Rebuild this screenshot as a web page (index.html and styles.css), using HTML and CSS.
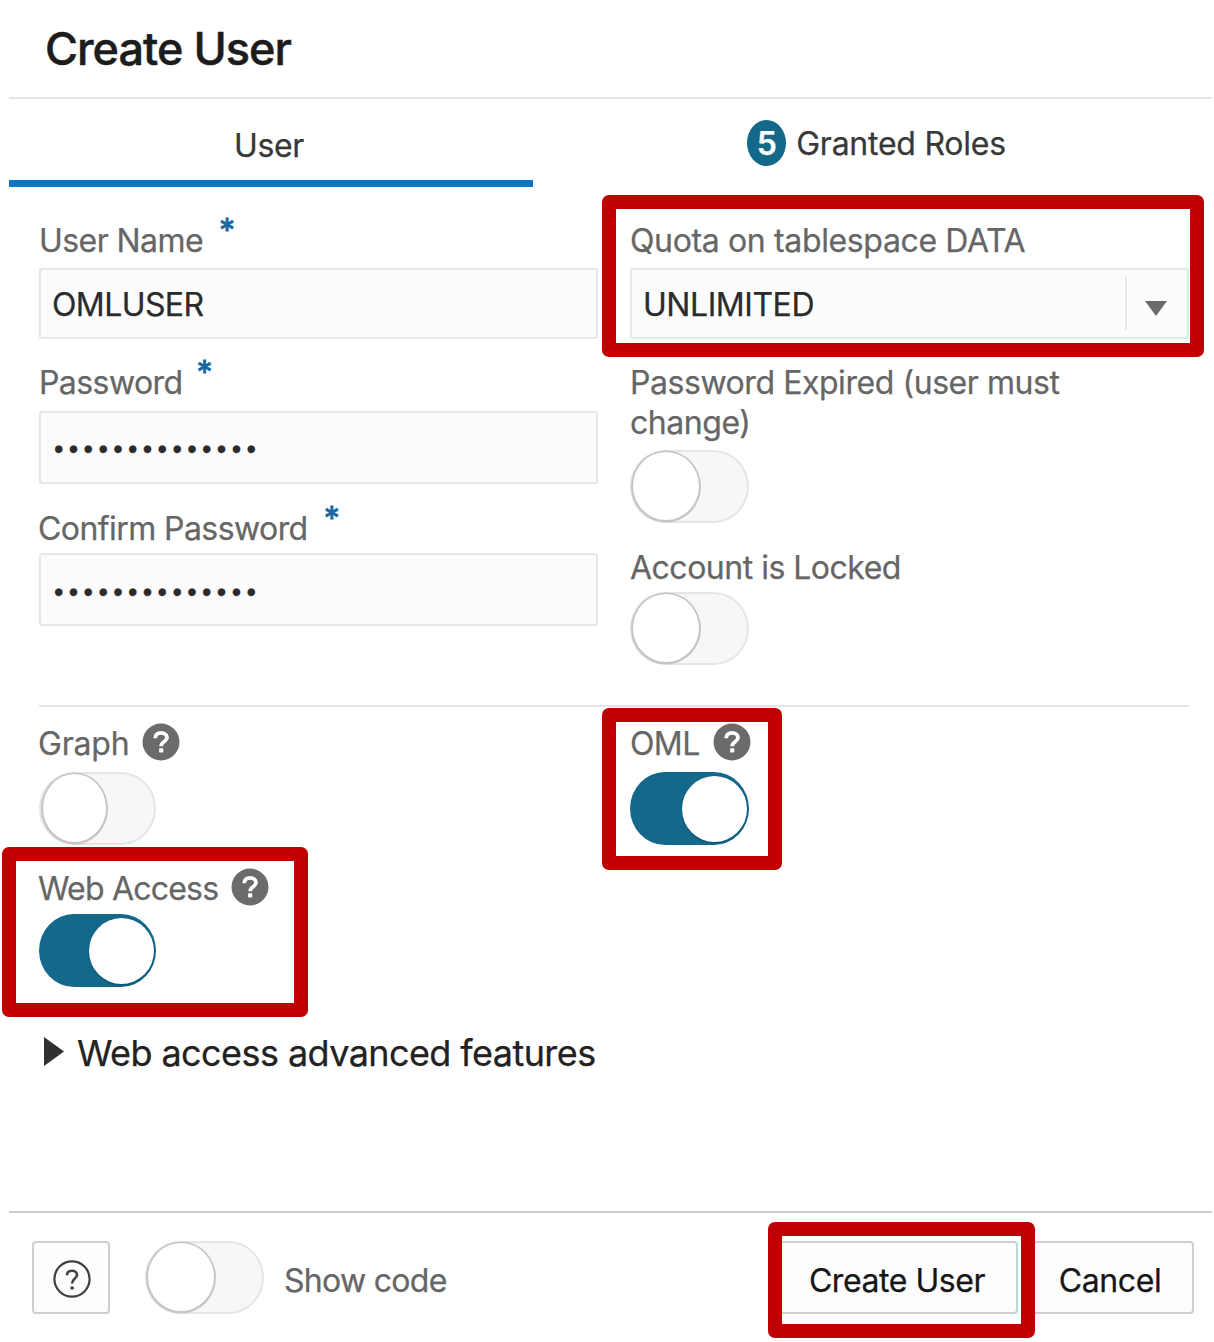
FILE: index.html
```
<!DOCTYPE html>
<html lang="en">
<head>
<meta charset="utf-8">
<title>Create User</title>
<link rel="stylesheet" href="styles.css">
</head>
<body>
<svg class="defs" aria-hidden="true">
  <symbol id="help" viewBox="0 0 38 38">
    <circle cx="19" cy="19" r="18.5" fill="#6b6b6b"/>
    <path d="M13.2 15.2C13.2 11.8 15.7 9.8 19 9.8C22.4 9.8 25 11.8 25 14.8C25 18.6 19.2 18.4 19.2 23.2" fill="none" stroke="#fff" stroke-width="3.8"/>
    <rect x="17.1" y="25.3" width="4.2" height="4.2" rx=".8" fill="#fff"/>
  </symbol>
</svg>
<main class="dialog">
  <header class="header"><h1 class="title">Create User</h1></header>

  <nav class="tabs">
    <div class="tab active"><span class="t-user">User</span></div>
    <div class="tab roles"><span class="badge">5</span><span class="t-roles">Granted Roles</span></div>
  </nav>

  <section class="fields">
    <div class="column">
      <div class="label">User Name<span class="star">*</span></div>
      <div class="input first">OMLUSER</div>
      <div class="label">Password<span class="star near">*</span></div>
      <div class="input dots">••••••••••••••</div>
      <div class="label confirm">Confirm Password<span class="star">*</span></div>
      <div class="input dots last">••••••••••••••</div>
    </div>
    <div class="column">
      <div class="label quota">Quota on tablespace DATA
        <span class="mark mark-quota"></span>
      </div>
      <div class="input first select">
        <span class="t-unlimited">UNLIMITED</span>
        <span class="arrow"><svg width="22" height="15" viewBox="0 0 22 15"><path d="M0 0H22L11 15Z" fill="#6b6b6b"/></svg></span>
      </div>
      <div class="label wrap">Password Expired (user must change)</div>
      <div class="switch"><span class="knob"></span></div>
      <div class="label locked">Account is Locked</div>
      <div class="switch"><span class="knob"></span></div>
    </div>
  </section>

  <section class="features">
    <div class="column">
      <div class="label t-graph">Graph<svg class="help"><use href="#help"/></svg></div>
      <div class="switch narrow"><span class="knob"></span></div>
      <div class="label t-web">Web Access<svg class="help"><use href="#help"/></svg>
        <span class="mark mark-web"></span>
      </div>
      <div class="switch narrow on"><span class="knob"></span></div>
    </div>
    <div class="column">
      <div class="label t-oml">OML<svg class="help"><use href="#help"/></svg>
        <span class="mark mark-oml"></span>
      </div>
      <div class="switch on"><span class="knob"></span></div>
    </div>
  </section>

  <div class="advanced">
    <svg width="20" height="30" viewBox="0 0 20 30"><path d="M0 0L20 14.5L0 29Z" fill="#303030"/></svg>
    <span>Web access advanced features</span>
  </div>

  <footer class="footer">
    <div class="button icon">
      <svg width="38" height="38" viewBox="0 0 38 38" fill="none" stroke="#404040">
        <circle cx="19" cy="19" r="17.6" stroke-width="2.2"/>
        <path d="M14 15.3C14 12.4 16.1 10.8 19 10.8C21.9 10.8 24 12.5 24 15C24 18.7 19.1 18.4 19.1 23.6" stroke-width="2.6"/>
        <circle cx="19.1" cy="28" r="1.8" fill="#404040" stroke="none"/>
      </svg>
    </div>
    <div class="switch"><span class="knob"></span></div>
    <span class="label show">Show code</span>
    <div class="button create">Create User<span class="mark mark-create"></span></div>
    <div class="button cancel">Cancel</div>
  </footer>
</main>
</body>
</html>
```
FILE: styles.css
```
* { box-sizing: border-box; }
body {
  margin: 0;
  background: #fff;
  color: #2b2b2b;
  font: 400 32px/39px Inter, "Liberation Sans", sans-serif;
  -webkit-text-stroke: .25px currentColor;
}
.defs { position: absolute; width: 0; height: 0; }
.dialog {
  display: flex;
  flex-direction: column;
  height: 1342px;
  padding: 0 2px 0 9px;
  overflow: hidden;
}

.header {
  height: 99px;
  padding: 19px 0 0 36px;
  border-bottom: 2px solid #e5e5e5;
}
.title {
  margin: 0;
  font-size: 45px;
  line-height: 60px;
  font-weight: 500;
  letter-spacing: -.98px;
  color: #1c1c1c;
  -webkit-text-stroke-width: .5px;
}

.tabs { display: grid; grid-template-columns: 524px 1fr; height: 88px; }
.tab { display: flex; justify-content: center; padding-top: 27px; color: #383838; }
.active { padding-right: 4px; border-bottom: 7px solid #0b76c4; }
.t-user { letter-spacing: -.4px; }
.roles { padding: 21px 0 0 8px; gap: 10px; }
.badge {
  width: 39px;
  height: 46px;
  border-radius: 50%;
  background: #14688a;
  color: #fff;
  font-weight: 600;
  line-height: 47px;
  text-align: center;
}
.t-roles { line-height: 48px; letter-spacing: -.25px; }

.fields {
  display: grid;
  grid-template-columns: 559px 559px;
  column-gap: 32px;
  height: 520px;
  margin: 0 23px 0 30px;
  padding-top: 34px;
  border-bottom: 2px solid #e5e5e5;
}
.column { display: flex; flex-direction: column; align-items: flex-start; }
.label {
  display: flex;
  position: relative;
  height: 39px;
  color: #666;
  letter-spacing: -.57px;
  white-space: nowrap;
}
.star { margin-left: 16px; color: #1668a2; line-height: 20px; -webkit-text-stroke-width: .8px; }
.near { margin-left: 14px; }
.confirm { margin-top: 1px; margin-left: -1px; }
.input {
  width: 100%;
  height: 73px;
  margin: 8px 0 24px;
  padding-left: 11px;
  border: 2px solid #e6e7e7;
  border-radius: 3px;
  background: #fcfcfc;
  line-height: 70px;
  letter-spacing: -.6px;
}
.first { height: 71px; }
.dots { margin-top: 9px; padding-left: 13px; font-family: "Liberation Sans", sans-serif; font-size: 27px; letter-spacing: 5.35px; line-height: 72px; }
.last { margin-top: 5px; line-height: 75px; }

.quota { letter-spacing: -.36px; }
.select { display: flex; justify-content: space-between; align-items: center; }
.t-unlimited { letter-spacing: -.45px; padding-top: 2px; }
.arrow {
  display: flex;
  align-items: center;
  justify-content: center;
  width: 62px;
  height: 53px;
  padding: 10px 3px 0 0;
  border-left: 2px solid #e6e7e7;
}
.wrap { display: block; width: 470px; height: 78px; margin-bottom: 9px; line-height: 40px; letter-spacing: -.44px; white-space: normal; }
.locked { margin: 25px 0 5px; letter-spacing: -.5px; }

.switch {
  display: flex;
  width: 119px;
  height: 73px;
  border: 2px solid #e4e6e6;
  border-radius: 35px / 36.5px;
  background: #f7f7f7;
}
.knob {
  width: 66px;
  height: 68px;
  border-radius: 50%;
  margin: 0 0 0 1px;
  background: #fff;
  box-shadow: 0 .5px 0 2px #c4c6c6;
}
.narrow { width: 117px; }
.narrow .knob { width: 63px; margin-left: 2px; }
.on { justify-content: flex-end; align-items: center; border-color: #14688a; background: #14688a; }
.switch.on .knob { width: 65px; height: 66px; margin: 0; box-shadow: 0 1px 2px #07506f; }

.features {
  display: grid;
  grid-template-columns: 591px 1fr;
  margin-left: 30px;
  padding-top: 17px;
}
.features .label { margin-bottom: 9px; line-height: 40px; }
.help { width: 38px; height: 38px; margin-left: 13px; margin-top: -1px; }
.features .t-web { margin: 24px 0 6px -1px; letter-spacing: -.8px; }
.t-graph { letter-spacing: -.2px; margin-left: -1px; }
.t-oml { letter-spacing: -.6px; }

.advanced {
  display: flex;
  align-items: center;
  gap: 13px;
  margin: 47px 0 0 35px;
  font-size: 36px;
  letter-spacing: -.58px;
  color: #222;
}
.advanced svg { margin-bottom: 4px; }

.footer {
  display: flex;
  height: 131px;
  margin-top: auto;
  padding: 28px 18px 0 23px;
  border-top: 2px solid #ccc;
}
.button {
  display: flex;
  position: relative;
  align-items: center;
  justify-content: center;
  height: 73px;
  padding-top: 5px;
  border: 2px solid #cfcfcf;
  border-radius: 4px;
  background: #fdfdfd;
  color: #161616;
  white-space: nowrap;
}
.icon { width: 78px; padding: 2px 0 0 2px; margin-right: 35px; }
.show { margin: 20px auto 0 20px; letter-spacing: -.7px; }
.create { width: 242px; margin-right: 8px; letter-spacing: -.45px; }
.cancel { width: 168px; letter-spacing: -.4px; }

/* Red callout frames drawn over the form */
.mark { position: absolute; z-index: 1; border: 14px solid #c00000; border-radius: 7px; }
.mark-quota { left: -28px; top: -26px; width: 602px; height: 162px; }
.mark-oml { left: -28px; top: -16px; width: 180px; height: 162px; }
.mark-web { left: -36px; top: -22px; width: 306px; height: 170px; }
.mark-create { left: -10px; top: -21px; width: 267px; height: 116px; }
```
